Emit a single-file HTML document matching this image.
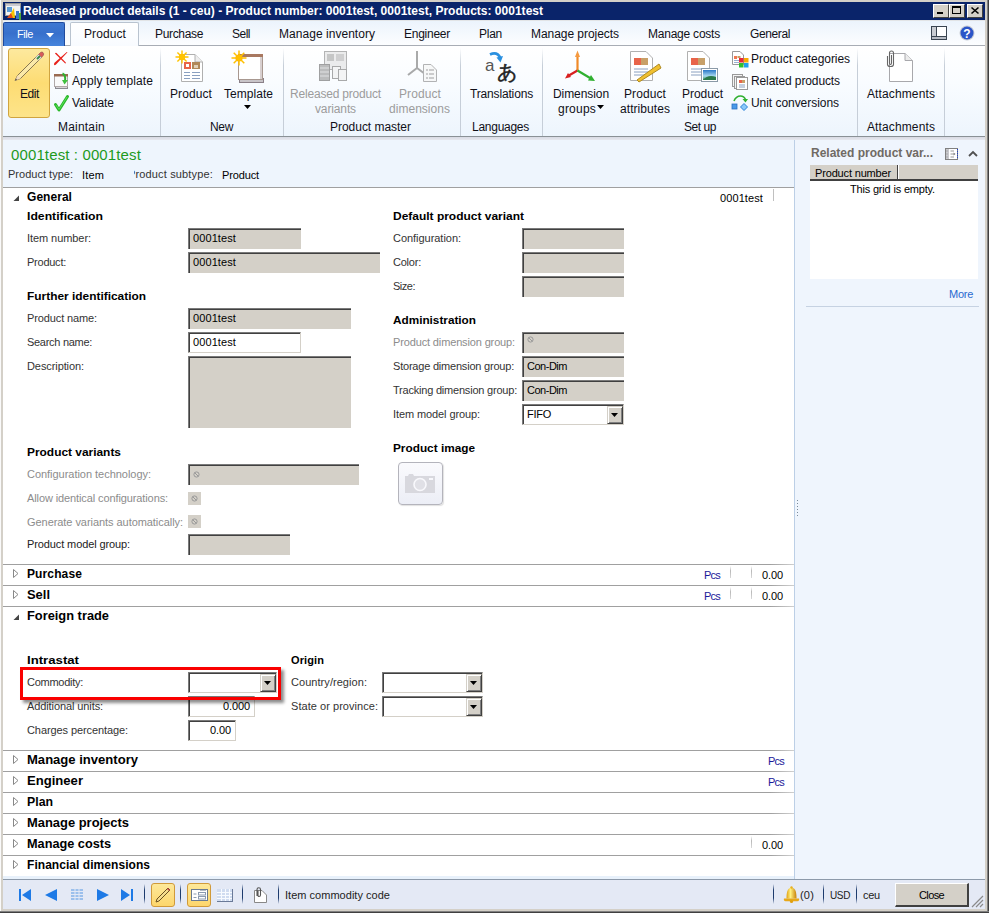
<!DOCTYPE html>
<html><head><meta charset="utf-8"><style>
html,body{margin:0;padding:0;width:989px;height:913px;overflow:hidden;position:relative;font-family:'Liberation Sans', sans-serif}
body>div,body>svg,div>div{position:absolute}
svg{position:absolute;overflow:visible}
</style></head><body>
<div style="left:0px;top:0px;width:989px;height:913px;background:#d4d0c8"></div>
<div style="left:0px;top:0px;width:1px;height:913px;background:#fafafa"></div>
<div style="left:987px;top:0px;width:1px;height:913px;background:#808080"></div>
<div style="left:988px;top:0px;width:1px;height:913px;background:#404040"></div>
<div style="left:0px;top:911px;width:989px;height:1px;background:#808080"></div>
<div style="left:0px;top:912px;width:989px;height:1px;background:#404040"></div>
<div style="left:3px;top:2px;width:982px;height:18px;background:#0a246a"></div>
<svg style="left:5px;top:3px" width="16" height="16"><rect x="0.5" y="0.5" width="15" height="12" fill="#f4f4f4" stroke="#9a9a9a"/><rect x="1" y="1" width="14" height="2" fill="#c8c8d0"/><rect x="2" y="4" width="5" height="5" fill="#5b9bd5"/><path d="M3 15 L9 5 L10 15Z" fill="#f5c400"/><path d="M2 15 L6 10 L8 15Z" fill="#e84c1c"/><rect x="11" y="8" width="3" height="8" fill="#3a78c8"/><rect x="14" y="10" width="2" height="7" fill="#4aa83a"/><rect x="15" y="5" width="1" height="4" fill="#5a9ae0"/></svg>
<div style="font-family:'Liberation Sans', sans-serif;white-space:nowrap;position:absolute;line-height:20px;font-size:12px;font-weight:bold;color:#fff;letter-spacing:0.013px;left:23px;top:1px">Released product details (1 - ceu) - Product number: 0001test, 0001test, Products: 0001test</div>
<div style="left:933px;top:4px;width:16px;height:14px;background:#d4d0c8;border-top:1px solid #fff;border-left:1px solid #fff;border-right:1px solid #404040;border-bottom:1px solid #404040;box-sizing:border-box"></div>
<div style="left:937px;top:12px;width:6px;height:2px;background:#000"></div>
<div style="left:949px;top:4px;width:16px;height:14px;background:#d4d0c8;border-top:1px solid #fff;border-left:1px solid #fff;border-right:1px solid #404040;border-bottom:1px solid #404040;box-sizing:border-box"></div>
<div style="left:952px;top:6px;width:9px;height:8px;border:1px solid #000;border-top-width:2px;box-sizing:border-box"></div>
<div style="left:967px;top:4px;width:16px;height:14px;background:#d4d0c8;border-top:1px solid #fff;border-left:1px solid #fff;border-right:1px solid #404040;border-bottom:1px solid #404040;box-sizing:border-box"></div>
<svg style="left:971px;top:7px" width="8" height="7"><path d="M0.5 0.5L7.5 6.5M7.5 0.5L0.5 6.5" stroke="#000" stroke-width="1.6"/></svg>
<div style="left:3px;top:20px;width:982px;height:26px;background:linear-gradient(#ebf3fc,#fdfeff)"></div>
<div style="left:3px;top:20px;width:982px;height:1px;background:#e2e4e6"></div>
<div style="left:3px;top:45px;width:982px;height:1px;background:#a8adb5"></div>
<div style="left:3px;top:22px;width:62px;height:24px;background:linear-gradient(#3f78d2,#3770cc 45%,#4684dc);border-radius:2px 2px 0 0;border:1px solid #1f4a9e;border-bottom:none;box-sizing:border-box"></div>
<div style="font-family:'Liberation Sans', sans-serif;white-space:nowrap;position:absolute;line-height:20px;font-size:11px;font-weight:normal;color:#fff;letter-spacing:-0.434px;left:17px;top:24px">File</div>
<svg style="left:46px;top:33px" width="8" height="5"><path d="M0 0H8L4 4.5Z" fill="#fff"/></svg>
<div style="left:70px;top:22px;width:69px;height:25px;background:linear-gradient(#ffffff,#f8fbff);border:1px solid #b9c3cf;border-bottom:none;border-radius:2px 2px 0 0;box-sizing:border-box"></div>
<div style="font-family:'Liberation Sans', sans-serif;white-space:nowrap;position:absolute;line-height:20px;font-size:12px;font-weight:normal;color:#101018;letter-spacing:0.092px;left:84px;top:24px">Product</div>
<div style="font-family:'Liberation Sans', sans-serif;white-space:nowrap;position:absolute;line-height:20px;font-size:12px;font-weight:normal;color:#101018;letter-spacing:-0.338px;left:155px;top:24px">Purchase</div>
<div style="font-family:'Liberation Sans', sans-serif;white-space:nowrap;position:absolute;line-height:20px;font-size:12px;font-weight:normal;color:#101018;letter-spacing:-0.504px;left:232px;top:24px">Sell</div>
<div style="font-family:'Liberation Sans', sans-serif;white-space:nowrap;position:absolute;line-height:20px;font-size:12px;font-weight:normal;color:#101018;letter-spacing:0.038px;left:279px;top:24px">Manage inventory</div>
<div style="font-family:'Liberation Sans', sans-serif;white-space:nowrap;position:absolute;line-height:20px;font-size:12px;font-weight:normal;color:#101018;letter-spacing:-0.256px;left:404px;top:24px">Engineer</div>
<div style="font-family:'Liberation Sans', sans-serif;white-space:nowrap;position:absolute;line-height:20px;font-size:12px;font-weight:normal;color:#101018;letter-spacing:-0.258px;left:479px;top:24px">Plan</div>
<div style="font-family:'Liberation Sans', sans-serif;white-space:nowrap;position:absolute;line-height:20px;font-size:12px;font-weight:normal;color:#101018;letter-spacing:-0.048px;left:531px;top:24px">Manage projects</div>
<div style="font-family:'Liberation Sans', sans-serif;white-space:nowrap;position:absolute;line-height:20px;font-size:12px;font-weight:normal;color:#101018;letter-spacing:-0.227px;left:648px;top:24px">Manage costs</div>
<div style="font-family:'Liberation Sans', sans-serif;white-space:nowrap;position:absolute;line-height:20px;font-size:12px;font-weight:normal;color:#101018;letter-spacing:-0.386px;left:750px;top:24px">General</div>
<svg style="left:931px;top:26px" width="16" height="14"><rect x="0.5" y="0.5" width="15" height="13" fill="#fff" stroke="#3a4450"/><rect x="1" y="1" width="4" height="10" fill="#c9ccd2"/><rect x="1" y="11" width="14" height="2" fill="#b8bcc4"/><line x1="5.5" y1="1" x2="5.5" y2="11" stroke="#3a4450"/><line x1="1" y1="10.5" x2="15" y2="10.5" stroke="#3a4450"/></svg>
<svg style="left:959px;top:25px" width="16" height="16"><circle cx="8" cy="8" r="7.5" fill="#c8ccd4"/><circle cx="8" cy="8" r="6.5" fill="#2a55c8"/><text x="8" y="12.5" font-family="Liberation Sans" font-weight="bold" font-size="12" fill="#fff" text-anchor="middle">?</text></svg>
<div style="left:3px;top:46px;width:982px;height:90px;background:linear-gradient(#ffffff 0%,#f9fcff 40%,#edf5fd 100%)"></div>
<div style="left:3px;top:136px;width:982px;height:1px;background:#8a9196"></div>
<div style="left:3px;top:137px;width:982px;height:3px;background:linear-gradient(#d8dae3,#e6e8ef)"></div>
<div style="left:160px;top:48px;width:1px;height:88px;background:linear-gradient(rgba(200,208,218,0),#c6ced8 20%,#c6ced8)"></div>
<div style="left:283px;top:48px;width:1px;height:88px;background:linear-gradient(rgba(200,208,218,0),#c6ced8 20%,#c6ced8)"></div>
<div style="left:460px;top:48px;width:1px;height:88px;background:linear-gradient(rgba(200,208,218,0),#c6ced8 20%,#c6ced8)"></div>
<div style="left:542px;top:48px;width:1px;height:88px;background:linear-gradient(rgba(200,208,218,0),#c6ced8 20%,#c6ced8)"></div>
<div style="left:857px;top:48px;width:1px;height:88px;background:linear-gradient(rgba(200,208,218,0),#c6ced8 20%,#c6ced8)"></div>
<div style="left:944px;top:48px;width:1px;height:88px;background:linear-gradient(rgba(200,208,218,0),#c6ced8 20%,#c6ced8)"></div>
<div style="left:8px;top:48px;width:42px;height:70px;background:linear-gradient(#fde99e,#fddc73 50%,#fde48a);border:1px solid #d0a440;border-radius:3px;box-sizing:border-box"></div>
<svg style="left:13px;top:50px" width="32" height="32"><path d="M2 30.5 L4.5 25.5 L25.5 4.5 L28.5 7.5 L7.5 28.5 Z" fill="#fbe9a8" stroke="#7a6a4a" stroke-width="0.9"/><path d="M25.5 4.5 L27.5 2.5 Q29 1.5 30 2.5 Q31 3.5 30.5 5 L28.5 7.5Z" fill="#d85a5a" stroke="#8a4a4a" stroke-width="0.6"/><path d="M22.5 7.5 L25.5 4.5 L28.5 7.5 L25.5 10.5Z" fill="#e8e8e8"/><path d="M23.3 8.3 L26.3 5.3 L27.7 6.7 L24.7 9.7Z" fill="#3a8a4a"/><path d="M2 30.5 L4.5 25.5 L7.5 28.5Z" fill="#f4dcb8"/><path d="M2 30.5 L3 28.5 L4 29.5Z" fill="#333"/></svg>
<div style="font-family:'Liberation Sans', sans-serif;white-space:nowrap;position:absolute;line-height:20px;font-size:12px;font-weight:normal;color:#101018;letter-spacing:-0.422px;left:20px;top:84px">Edit</div>
<svg style="left:53px;top:51px" width="16" height="16"><path d="M1 13.5 Q1.5 15 3 13.5 L14.5 1.2 L13.8 1 L1.8 11.5 Q0.8 12.5 1 13.5Z" fill="#e8201a"/><path d="M2 2.5 Q2.5 1.5 3.5 2 L12.8 11.5 Q13 12.5 12.2 12.5 Z" fill="#e8201a"/></svg>
<svg style="left:54px;top:73px" width="16" height="17"><rect x="1.5" y="12.5" width="12" height="3" fill="#d8d4d8" stroke="#8a8a90"/><rect x="0.5" y="1.5" width="13" height="12" fill="#fafafa" stroke="#b0a8a8"/><rect x="0" y="1" width="14" height="2.5" fill="#9a6a50"/><path d="M8.5 0.5 Q12 2 11 8" stroke="#30b030" stroke-width="2" fill="none"/><path d="M8 7 L14 7 L10.5 11.5Z" fill="#40c040"/></svg>
<svg style="left:54px;top:95px" width="16" height="17"><path d="M1.5 9.5 L5 15 L13.5 1.5" stroke="#2ab82a" stroke-width="3" fill="none" stroke-linejoin="round" stroke-linecap="round"/><path d="M1.8 9.8 L5 14.5 L13.2 1.8" stroke="#5ae05a" stroke-width="1" fill="none"/></svg>
<div style="font-family:'Liberation Sans', sans-serif;white-space:nowrap;position:absolute;line-height:20px;font-size:12px;font-weight:normal;color:#101018;letter-spacing:-0.281px;left:72px;top:49px">Delete</div>
<div style="font-family:'Liberation Sans', sans-serif;white-space:nowrap;position:absolute;line-height:20px;font-size:12px;font-weight:normal;color:#101018;letter-spacing:0.115px;left:72px;top:71px">Apply template</div>
<div style="font-family:'Liberation Sans', sans-serif;white-space:nowrap;position:absolute;line-height:20px;font-size:12px;font-weight:normal;color:#101018;letter-spacing:-0.061px;left:72px;top:93px">Validate</div>
<div style="font-family:'Liberation Sans', sans-serif;white-space:nowrap;position:absolute;line-height:20px;font-size:12px;font-weight:normal;color:#101018;letter-spacing:0.205px;left:58px;top:117px">Maintain</div>
<svg style="left:174px;top:50px" width="32" height="34"><path d="M7.5 4.5 H21 L28.5 12 V31.5 H7.5Z" fill="#fff" stroke="#b0b0b0"/><path d="M21 4.5 V12 H28.5" fill="#eee" stroke="#b0b0b0"/><rect x="10" y="12" width="7" height="7" fill="#e8644a"/><rect x="12" y="14" width="3" height="3" fill="#fff"/><rect x="18" y="12" width="8" height="7" fill="#b08858"/><rect x="20" y="15" width="4" height="3" fill="#e0d0b8"/><path d="M10 22.5H16M18 22.5H26M10 25.5H16M18 25.5H26M10 28.5H16M18 28.5H26" stroke="#8aa0c0"/><circle cx="8" cy="7" r="3.2" fill="#ffb800"/><path d="M8 0.5V13.5M1.5 7H14.5M3.4 2.4L12.6 11.6M12.6 2.4L3.4 11.6" stroke="#ffc400" stroke-width="1.4"/></svg>
<svg style="left:229px;top:50px" width="36" height="34"><rect x="10.5" y="28.5" width="24" height="4" fill="#c8c4c8" stroke="#8a8088"/><rect x="9.5" y="4.5" width="24" height="25" fill="#fff" stroke="#a89890"/><rect x="9" y="4" width="25" height="3" fill="#a87860"/><rect x="31" y="7" width="2" height="22" fill="#d8d0d0"/><circle cx="10" cy="8" r="3.6" fill="#ffb000"/><path d="M10 0.5V15.5M2.5 8H17.5M4.7 2.7L15.3 13.3M15.3 2.7L4.7 13.3" stroke="#ffc000" stroke-width="1.5"/></svg>
<div style="font-family:'Liberation Sans', sans-serif;white-space:nowrap;position:absolute;line-height:20px;font-size:12px;font-weight:normal;color:#101018;letter-spacing:0.092px;left:170px;top:84px">Product</div>
<div style="font-family:'Liberation Sans', sans-serif;white-space:nowrap;position:absolute;line-height:20px;font-size:12px;font-weight:normal;color:#101018;letter-spacing:0.037px;left:224px;top:84px">Template</div>
<svg style="left:244px;top:105px" width="7" height="5"><path d="M0 0H7L3.5 4Z" fill="#000"/></svg>
<div style="font-family:'Liberation Sans', sans-serif;white-space:nowrap;position:absolute;line-height:20px;font-size:12px;font-weight:normal;color:#101018;letter-spacing:-0.339px;left:210px;top:117px">New</div>
<svg style="left:318px;top:50px" width="32" height="32" opacity="0.55"><rect x="6.5" y="1.5" width="22" height="18" fill="#ddd" stroke="#777"/><rect x="9" y="4" width="7" height="7" fill="#999"/><rect x="18" y="4" width="8" height="7" fill="#aaa"/><rect x="1.5" y="14.5" width="10" height="16" fill="#888" stroke="#555"/><path d="M2 18H11M2 22H11M2 26H11" stroke="#ccc"/><rect x="14.5" y="16.5" width="8" height="12" fill="#eee" stroke="#666"/><rect x="20.5" y="19.5" width="8" height="11" fill="#eee" stroke="#666"/></svg>
<svg style="left:406px;top:50px" width="32" height="32" opacity="0.55"><path d="M11 1 V18 M11 18 L2 25 M11 18 L19 24" stroke="#666" stroke-width="2"/><path d="M17.5 14.5 H25 L30.5 20 V31.5 H17.5Z" fill="#f4f4f4" stroke="#777"/><path d="M20 20h2M20 24h2M20 28h2M23 20h5M23 24h5M23 28h5" stroke="#555"/></svg>
<div style="font-family:'Liberation Sans', sans-serif;white-space:nowrap;position:absolute;line-height:20px;font-size:12px;font-weight:normal;color:#9c9c9c;letter-spacing:-0.191px;left:290px;top:84px">Released product</div>
<div style="font-family:'Liberation Sans', sans-serif;white-space:nowrap;position:absolute;line-height:20px;font-size:12px;font-weight:normal;color:#9c9c9c;letter-spacing:-0.129px;left:315px;top:99px">variants</div>
<div style="font-family:'Liberation Sans', sans-serif;white-space:nowrap;position:absolute;line-height:20px;font-size:12px;font-weight:normal;color:#9c9c9c;letter-spacing:0.092px;left:399px;top:84px">Product</div>
<div style="font-family:'Liberation Sans', sans-serif;white-space:nowrap;position:absolute;line-height:20px;font-size:12px;font-weight:normal;color:#9c9c9c;letter-spacing:0.030px;left:389px;top:99px">dimensions</div>
<div style="font-family:'Liberation Sans', sans-serif;white-space:nowrap;position:absolute;line-height:20px;font-size:12px;font-weight:normal;color:#101018;letter-spacing:-0.027px;left:330px;top:117px">Product master</div>
<svg style="left:484px;top:50px" width="34" height="34"><path d="M6 4.5 Q13 1 16.5 8" stroke="#2a90e0" stroke-width="2.6" fill="none"/><path d="M12.5 7.5 L19 6 L16.5 12.5Z" fill="#2a90e0"/><text x="1" y="21" font-family="Liberation Sans" font-size="17" fill="#555">a</text><text x="13" y="29" font-family="Liberation Sans, sans-serif" font-size="20" fill="#222" stroke="#222" stroke-width="0.5">あ</text></svg>
<div style="font-family:'Liberation Sans', sans-serif;white-space:nowrap;position:absolute;line-height:20px;font-size:12px;font-weight:normal;color:#101018;letter-spacing:-0.160px;left:470px;top:84px">Translations</div>
<div style="font-family:'Liberation Sans', sans-serif;white-space:nowrap;position:absolute;line-height:20px;font-size:12px;font-weight:normal;color:#101018;letter-spacing:-0.266px;left:472px;top:117px">Languages</div>
<svg style="left:562px;top:49px" width="36" height="34"><path d="M15.5 5 L15.5 21.5" stroke="#f08a28" stroke-width="2.2"/><path d="M13 8 L15.5 1.5 L18 8Z" fill="#f59a40"/><path d="M15.5 21.5 L6 27" stroke="#d82020" stroke-width="2.2"/><path d="M3 29.5 L6 24 L9 28Z" fill="#d82020"/><path d="M15.5 21.5 L28 29" stroke="#30b030" stroke-width="2.2"/><path d="M33 32 L26 31.5 L29 26Z" fill="#30b030"/></svg>
<div style="font-family:'Liberation Sans', sans-serif;white-space:nowrap;position:absolute;line-height:20px;font-size:12px;font-weight:normal;color:#101018;letter-spacing:-0.078px;left:553px;top:84px">Dimension</div>
<div style="font-family:'Liberation Sans', sans-serif;white-space:nowrap;position:absolute;line-height:20px;font-size:12px;font-weight:normal;color:#101018;letter-spacing:0.216px;left:558px;top:99px">groups</div>
<svg style="left:597px;top:105px" width="7" height="5"><path d="M0 0H7L3.5 4Z" fill="#000"/></svg>
<svg style="left:629px;top:50px" width="32" height="32"><path d="M1.5 1.5 H17 L23.5 8 V30.5 H1.5Z" fill="#fff" stroke="#b0b0b0"/><rect x="5" y="8" width="7" height="7" fill="#e8644a"/><rect x="12" y="8" width="7" height="7" fill="#c8a068"/><path d="M5 19H19M5 22H19M5 25H19" stroke="#8aa0c0"/><path d="M8 30 L30 14 L32 18 L10 32Z" fill="#f0c030" stroke="#b08a20"/></svg>
<div style="font-family:'Liberation Sans', sans-serif;white-space:nowrap;position:absolute;line-height:20px;font-size:12px;font-weight:normal;color:#101018;letter-spacing:0.092px;left:624px;top:84px">Product</div>
<div style="font-family:'Liberation Sans', sans-serif;white-space:nowrap;position:absolute;line-height:20px;font-size:12px;font-weight:normal;color:#101018;letter-spacing:0.064px;left:620px;top:99px">attributes</div>
<svg style="left:686px;top:50px" width="32" height="32"><path d="M1.5 1.5 H17 L23.5 8 V30.5 H1.5Z" fill="#fff" stroke="#b0b0b0"/><rect x="5" y="8" width="7" height="7" fill="#e8644a"/><rect x="12" y="8" width="7" height="7" fill="#c8a068"/><path d="M5 19H15M5 22H15M5 25H15" stroke="#8aa0c0"/><defs><linearGradient id="sky" x1="0" y1="0" x2="0" y2="1"><stop offset="0" stop-color="#2a78c8"/><stop offset="0.6" stop-color="#a8d8f0"/><stop offset="1" stop-color="#3a8a5a"/></linearGradient></defs><rect x="15.5" y="18.5" width="16" height="13" fill="#fff" stroke="#8a9aa8"/><rect x="17" y="20" width="13" height="10" fill="url(#sky)"/><path d="M17 30 Q22 24 30 27 V30Z" fill="#2a7a4a"/></svg>
<div style="font-family:'Liberation Sans', sans-serif;white-space:nowrap;position:absolute;line-height:20px;font-size:12px;font-weight:normal;color:#101018;letter-spacing:-0.051px;left:682px;top:84px">Product</div>
<div style="font-family:'Liberation Sans', sans-serif;white-space:nowrap;position:absolute;line-height:20px;font-size:12px;font-weight:normal;color:#101018;letter-spacing:-0.138px;left:687px;top:99px">image</div>
<div style="font-family:'Liberation Sans', sans-serif;white-space:nowrap;position:absolute;line-height:20px;font-size:12px;font-weight:normal;color:#101018;letter-spacing:-0.451px;left:684px;top:117px">Set up</div>
<svg style="left:732px;top:51px" width="17" height="17"><path d="M0.5 0.5H8L11.5 4V13.5H0.5Z" fill="#fff" stroke="#999"/><rect x="2" y="5" width="3" height="3" fill="#f07850"/><rect x="5.5" y="5" width="3" height="2" fill="#c8a068"/><path d="M2 9.5H7M2 11.5H7" stroke="#9ab0d0"/><rect x="7" y="7" width="4.5" height="4.5" fill="#e82838"/><rect x="12" y="7" width="4.5" height="4.5" fill="#f8a800"/><rect x="7" y="12" width="4.5" height="4.5" fill="#30c030"/><rect x="12" y="12" width="4.5" height="4.5" fill="#20a0e8"/></svg>
<svg style="left:732px;top:74px" width="17" height="16"><rect x="0.5" y="0.5" width="10" height="12" fill="#f4f4f4" stroke="#999"/><rect x="2.5" y="2.5" width="10" height="12" fill="#f4f4f4" stroke="#999"/><rect x="4.5" y="3.5" width="11" height="12" fill="#fff" stroke="#999"/><rect x="7" y="6" width="3" height="3" fill="#e8644a"/><rect x="10" y="6" width="3" height="3" fill="#c8a068"/><path d="M7 11H13M7 13H13" stroke="#8aa0c0"/></svg>
<svg style="left:731px;top:95px" width="18" height="16"><path d="M3 6 Q5 1 9.5 1 Q13 1 14.5 4.5" stroke="#30b030" stroke-width="1.6" fill="none"/><path d="M11.5 4 L17 4 L14.5 7.5Z" fill="#30b030"/><rect x="1" y="9" width="5" height="5" fill="#4a9ae8" stroke="#2a70c0" stroke-width="0.8"/><path d="M13 8.5 L16.5 12 L13 15.5 L9.5 12Z" fill="#8ac8f8" stroke="#2a80d8"/></svg>
<div style="font-family:'Liberation Sans', sans-serif;white-space:nowrap;position:absolute;line-height:20px;font-size:12px;font-weight:normal;color:#101018;letter-spacing:-0.059px;left:751px;top:49px">Product categories</div>
<div style="font-family:'Liberation Sans', sans-serif;white-space:nowrap;position:absolute;line-height:20px;font-size:12px;font-weight:normal;color:#101018;letter-spacing:-0.108px;left:751px;top:71px">Related products</div>
<div style="font-family:'Liberation Sans', sans-serif;white-space:nowrap;position:absolute;line-height:20px;font-size:12px;font-weight:normal;color:#101018;letter-spacing:-0.045px;left:751px;top:93px">Unit conversions</div>
<svg style="left:884px;top:50px" width="32" height="33"><path d="M5.5 3.5 H21 L28.5 10.5 V31.5 H5.5Z" fill="#fff" stroke="#a8a8ac"/><path d="M21 3.5 V10.5 H28.5" fill="#ececec" stroke="#a8a8ac"/><path d="M3.5 6 V14.5 Q3.5 16.5 6.5 16.5 Q9.5 16.5 9.5 14.5 V3 Q9.5 1 7.5 1 Q5.5 1 5.5 3 V13 Q5.5 14.5 6.5 14.5 Q7.5 14.5 7.5 13 V5" stroke="#666" stroke-width="1.1" fill="none"/></svg>
<div style="font-family:'Liberation Sans', sans-serif;white-space:nowrap;position:absolute;line-height:20px;font-size:12px;font-weight:normal;color:#101018;letter-spacing:0.118px;left:867px;top:84px">Attachments</div>
<div style="font-family:'Liberation Sans', sans-serif;white-space:nowrap;position:absolute;line-height:20px;font-size:12px;font-weight:normal;color:#101018;letter-spacing:0.118px;left:867px;top:117px">Attachments</div>
<div style="left:3px;top:140px;width:792px;height:47px;background:#eef5fd"></div>
<div style="font-family:'Liberation Sans', sans-serif;white-space:nowrap;position:absolute;line-height:20px;font-size:15px;font-weight:normal;color:#1e9a1e;letter-spacing:0.126px;left:11px;top:145px">0001test : 0001test</div>
<div style="font-family:'Liberation Sans', sans-serif;white-space:nowrap;position:absolute;line-height:20px;font-size:11px;font-weight:normal;color:#333;letter-spacing:0.013px;left:8px;top:164px">Product type:</div>
<div style="font-family:'Liberation Sans', sans-serif;white-space:nowrap;position:absolute;line-height:20px;font-size:11px;font-weight:normal;color:#000;letter-spacing:0.148px;left:82px;top:165px">Item</div>
<div style="left:134px;top:160px;width:90px;height:25px;overflow:hidden"><div style="font-family:'Liberation Sans', sans-serif;white-space:nowrap;position:absolute;line-height:20px;font-size:11px;font-weight:normal;color:#333;letter-spacing:0.152px;left:-6px;top:4px">Product subtype:</div></div>
<div style="font-family:'Liberation Sans', sans-serif;white-space:nowrap;position:absolute;line-height:20px;font-size:11px;font-weight:normal;color:#000;letter-spacing:-0.132px;left:222px;top:165px">Product</div>
<div style="left:3px;top:187px;width:791px;height:692px;background:#fff"></div>
<div style="left:3px;top:187px;width:791px;height:1px;background:#a0a0a0"></div>
<div style="left:794px;top:140px;width:1px;height:739px;background:#bccfe6"></div>
<div style="left:795px;top:140px;width:190px;height:739px;background:#eff5fd"></div>
<div style="left:797px;top:500px;width:1px;height:1px;background:#7a8a9a"></div>
<div style="left:797px;top:503px;width:1px;height:1px;background:#7a8a9a"></div>
<div style="left:797px;top:506px;width:1px;height:1px;background:#7a8a9a"></div>
<div style="left:797px;top:509px;width:1px;height:1px;background:#7a8a9a"></div>
<div style="left:797px;top:512px;width:1px;height:1px;background:#7a8a9a"></div>
<div style="left:797px;top:515px;width:1px;height:1px;background:#7a8a9a"></div>
<svg style="left:13px;top:195px" width="7" height="7"><path d="M6 0.5 V6 H0.5Z" fill="#444"/></svg>
<div style="font-family:'Liberation Sans', sans-serif;white-space:nowrap;position:absolute;line-height:20px;font-size:12px;font-weight:bold;color:#000;letter-spacing:0.042px;left:27px;top:187px">General</div>
<div style="font-family:'Liberation Sans', sans-serif;white-space:nowrap;position:absolute;line-height:20px;font-size:11px;font-weight:normal;color:#000;letter-spacing:0.100px;left:720px;top:188px">0001test</div>
<div style="left:773px;top:189px;width:1px;height:12px;background:#c0c0c0"></div>
<div style="font-family:'Liberation Sans', sans-serif;white-space:nowrap;position:absolute;line-height:20px;font-size:11px;font-weight:bold;color:#000;transform:scaleX(1.1102);transform-origin:0 0;left:27px;top:206px">Identification</div>
<div style="font-family:'Liberation Sans', sans-serif;white-space:nowrap;position:absolute;line-height:20px;font-size:11px;font-weight:normal;color:#333;letter-spacing:-0.068px;left:27px;top:228px">Item number:</div>
<div style="left:188px;top:228px;width:113px;height:21px;background:#d4d0c8;border-top:1px solid #7a7a7a;border-left:1px solid #7a7a7a;box-sizing:border-box;box-shadow:inset 1px 1px 0 #404040"></div>
<div style="font-family:'Liberation Sans', sans-serif;white-space:nowrap;position:absolute;line-height:20px;font-size:11px;font-weight:normal;color:#000;letter-spacing:0.100px;left:193px;top:228px">0001test</div>
<div style="font-family:'Liberation Sans', sans-serif;white-space:nowrap;position:absolute;line-height:20px;font-size:11px;font-weight:normal;color:#333;letter-spacing:-0.246px;left:27px;top:252px">Product:</div>
<div style="left:188px;top:252px;width:192px;height:21px;background:#d4d0c8;border-top:1px solid #7a7a7a;border-left:1px solid #7a7a7a;box-sizing:border-box;box-shadow:inset 1px 1px 0 #404040"></div>
<div style="font-family:'Liberation Sans', sans-serif;white-space:nowrap;position:absolute;line-height:20px;font-size:11px;font-weight:normal;color:#000;letter-spacing:0.100px;left:193px;top:252px">0001test</div>
<div style="font-family:'Liberation Sans', sans-serif;white-space:nowrap;position:absolute;line-height:20px;font-size:11px;font-weight:bold;color:#000;transform:scaleX(1.0818);transform-origin:0 0;left:27px;top:286px">Further identification</div>
<div style="font-family:'Liberation Sans', sans-serif;white-space:nowrap;position:absolute;line-height:20px;font-size:11px;font-weight:normal;color:#333;letter-spacing:-0.119px;left:27px;top:308px">Product name:</div>
<div style="left:188px;top:308px;width:163px;height:21px;background:#d4d0c8;border-top:1px solid #7a7a7a;border-left:1px solid #7a7a7a;box-sizing:border-box;box-shadow:inset 1px 1px 0 #404040"></div>
<div style="font-family:'Liberation Sans', sans-serif;white-space:nowrap;position:absolute;line-height:20px;font-size:11px;font-weight:normal;color:#000;letter-spacing:0.100px;left:193px;top:308px">0001test</div>
<div style="font-family:'Liberation Sans', sans-serif;white-space:nowrap;position:absolute;line-height:20px;font-size:11px;font-weight:normal;color:#333;letter-spacing:-0.290px;left:27px;top:332px">Search name:</div>
<div style="left:188px;top:332px;width:113px;height:21px;background:#fff;border-top:1px solid #7a7a7a;border-left:1px solid #7a7a7a;border-right:1px solid #d4d0c8;border-bottom:1px solid #d4d0c8;box-sizing:border-box;box-shadow:inset 1px 1px 0 #404040"></div>
<div style="font-family:'Liberation Sans', sans-serif;white-space:nowrap;position:absolute;line-height:20px;font-size:11px;font-weight:normal;color:#000;letter-spacing:0.100px;left:193px;top:332px">0001test</div>
<div style="font-family:'Liberation Sans', sans-serif;white-space:nowrap;position:absolute;line-height:20px;font-size:11px;font-weight:normal;color:#333;letter-spacing:-0.090px;left:27px;top:356px">Description:</div>
<div style="left:188px;top:356px;width:163px;height:72px;background:#d4d0c8;border-top:1px solid #7a7a7a;border-left:1px solid #7a7a7a;box-sizing:border-box;box-shadow:inset 1px 1px 0 #404040"></div>
<div style="font-family:'Liberation Sans', sans-serif;white-space:nowrap;position:absolute;line-height:20px;font-size:11px;font-weight:bold;color:#000;transform:scaleX(1.0880);transform-origin:0 0;left:393px;top:206px">Default product variant</div>
<div style="font-family:'Liberation Sans', sans-serif;white-space:nowrap;position:absolute;line-height:20px;font-size:11px;font-weight:normal;color:#333;letter-spacing:-0.036px;left:393px;top:228px">Configuration:</div>
<div style="left:522px;top:228px;width:102px;height:21px;background:#d4d0c8;border-top:1px solid #7a7a7a;border-left:1px solid #7a7a7a;box-sizing:border-box;box-shadow:inset 1px 1px 0 #404040"></div>
<div style="font-family:'Liberation Sans', sans-serif;white-space:nowrap;position:absolute;line-height:20px;font-size:11px;font-weight:normal;color:#333;letter-spacing:-0.224px;left:393px;top:252px">Color:</div>
<div style="left:522px;top:252px;width:102px;height:21px;background:#d4d0c8;border-top:1px solid #7a7a7a;border-left:1px solid #7a7a7a;box-sizing:border-box;box-shadow:inset 1px 1px 0 #404040"></div>
<div style="font-family:'Liberation Sans', sans-serif;white-space:nowrap;position:absolute;line-height:20px;font-size:11px;font-weight:normal;color:#333;letter-spacing:-0.494px;left:393px;top:276px">Size:</div>
<div style="left:522px;top:276px;width:102px;height:21px;background:#d4d0c8;border-top:1px solid #7a7a7a;border-left:1px solid #7a7a7a;box-sizing:border-box;box-shadow:inset 1px 1px 0 #404040"></div>
<div style="font-family:'Liberation Sans', sans-serif;white-space:nowrap;position:absolute;line-height:20px;font-size:11px;font-weight:bold;color:#000;transform:scaleX(1.0692);transform-origin:0 0;left:393px;top:310px">Administration</div>
<div style="font-family:'Liberation Sans', sans-serif;white-space:nowrap;position:absolute;line-height:20px;font-size:11px;font-weight:normal;color:#8c8c8c;letter-spacing:-0.140px;left:393px;top:332px">Product dimension group:</div>
<div style="left:522px;top:332px;width:102px;height:21px;background:#d4d0c8;border-top:1px solid #7a7a7a;border-left:1px solid #7a7a7a;box-sizing:border-box;box-shadow:inset 1px 1px 0 #404040"></div>
<svg style="left:527px;top:336px" width="7" height="7"><circle cx="3.5" cy="3.5" r="2.6" fill="none" stroke="#999"/><path d="M1.7 1.7L5.3 5.3" stroke="#999"/></svg>
<div style="font-family:'Liberation Sans', sans-serif;white-space:nowrap;position:absolute;line-height:20px;font-size:11px;font-weight:normal;color:#333;letter-spacing:-0.207px;left:393px;top:356px">Storage dimension group:</div>
<div style="left:522px;top:356px;width:102px;height:21px;background:#d4d0c8;border-top:1px solid #7a7a7a;border-left:1px solid #7a7a7a;box-sizing:border-box;box-shadow:inset 1px 1px 0 #404040"></div>
<div style="font-family:'Liberation Sans', sans-serif;white-space:nowrap;position:absolute;line-height:20px;font-size:11px;font-weight:normal;color:#000;letter-spacing:-0.487px;left:527px;top:356px">Con-Dim</div>
<div style="font-family:'Liberation Sans', sans-serif;white-space:nowrap;position:absolute;line-height:20px;font-size:11px;font-weight:normal;color:#333;letter-spacing:-0.209px;left:393px;top:380px">Tracking dimension group:</div>
<div style="left:522px;top:380px;width:102px;height:21px;background:#d4d0c8;border-top:1px solid #7a7a7a;border-left:1px solid #7a7a7a;box-sizing:border-box;box-shadow:inset 1px 1px 0 #404040"></div>
<div style="font-family:'Liberation Sans', sans-serif;white-space:nowrap;position:absolute;line-height:20px;font-size:11px;font-weight:normal;color:#000;letter-spacing:-0.487px;left:527px;top:380px">Con-Dim</div>
<div style="font-family:'Liberation Sans', sans-serif;white-space:nowrap;position:absolute;line-height:20px;font-size:11px;font-weight:normal;color:#333;letter-spacing:-0.097px;left:393px;top:404px">Item model group:</div>
<div style="left:522px;top:404px;width:102px;height:21px;background:#fff;border-top:1px solid #7a7a7a;border-left:1px solid #7a7a7a;border-right:1px solid #d4d0c8;border-bottom:1px solid #d4d0c8;box-sizing:border-box;box-shadow:inset 1px 1px 0 #404040"></div>
<div style="left:607px;top:406px;width:16px;height:18px;background:#d4d0c8;border-top:1px solid #d4d0c8;border-left:1px solid #d4d0c8;border-right:1px solid #404040;border-bottom:1px solid #404040;box-sizing:border-box;box-shadow:inset 1px 1px 0 #fff,inset -1px -1px 0 #808080"></div>
<svg style="left:611px;top:413px" width="7" height="5"><path d="M0 0H7L3.5 4Z" fill="#000"/></svg>
<div style="font-family:'Liberation Sans', sans-serif;white-space:nowrap;position:absolute;line-height:20px;font-size:11px;font-weight:normal;color:#000;letter-spacing:-0.266px;left:527px;top:404px">FIFO</div>
<div style="font-family:'Liberation Sans', sans-serif;white-space:nowrap;position:absolute;line-height:20px;font-size:11px;font-weight:bold;color:#000;transform:scaleX(1.0828);transform-origin:0 0;left:27px;top:442px">Product variants</div>
<div style="font-family:'Liberation Sans', sans-serif;white-space:nowrap;position:absolute;line-height:20px;font-size:11px;font-weight:normal;color:#8c8c8c;letter-spacing:-0.030px;left:27px;top:464px">Configuration technology:</div>
<div style="left:188px;top:464px;width:171px;height:21px;background:#d4d0c8;border-top:1px solid #7a7a7a;border-left:1px solid #7a7a7a;box-sizing:border-box;box-shadow:inset 1px 1px 0 #404040"></div>
<svg style="left:193px;top:471px" width="7" height="7"><circle cx="3.5" cy="3.5" r="2.6" fill="none" stroke="#999"/><path d="M1.7 1.7L5.3 5.3" stroke="#999"/></svg>
<div style="font-family:'Liberation Sans', sans-serif;white-space:nowrap;position:absolute;line-height:20px;font-size:11px;font-weight:normal;color:#8c8c8c;letter-spacing:-0.107px;left:27px;top:488px">Allow identical configurations:</div>
<div style="left:188px;top:492px;width:13px;height:13px;background:#d4d0c8"></div>
<svg style="left:191px;top:495px" width="7" height="7"><circle cx="3.5" cy="3.5" r="2.6" fill="none" stroke="#999"/><path d="M1.7 1.7L5.3 5.3" stroke="#999"/></svg>
<div style="font-family:'Liberation Sans', sans-serif;white-space:nowrap;position:absolute;line-height:20px;font-size:11px;font-weight:normal;color:#8c8c8c;letter-spacing:-0.055px;left:27px;top:512px">Generate variants automatically:</div>
<div style="left:188px;top:515px;width:13px;height:13px;background:#d4d0c8"></div>
<svg style="left:191px;top:518px" width="7" height="7"><circle cx="3.5" cy="3.5" r="2.6" fill="none" stroke="#999"/><path d="M1.7 1.7L5.3 5.3" stroke="#999"/></svg>
<div style="font-family:'Liberation Sans', sans-serif;white-space:nowrap;position:absolute;line-height:20px;font-size:11px;font-weight:normal;color:#222;letter-spacing:-0.109px;left:27px;top:534px">Product model group:</div>
<div style="left:188px;top:534px;width:102px;height:21px;background:#d4d0c8;border-top:1px solid #7a7a7a;border-left:1px solid #7a7a7a;box-sizing:border-box;box-shadow:inset 1px 1px 0 #404040"></div>
<div style="font-family:'Liberation Sans', sans-serif;white-space:nowrap;position:absolute;line-height:20px;font-size:11px;font-weight:bold;color:#000;transform:scaleX(1.0732);transform-origin:0 0;left:393px;top:438px">Product image</div>
<div style="left:398px;top:462px;width:45px;height:43px;background:linear-gradient(#fafafd,#eceef6);border:1px solid #b4b4bc;border-radius:4px;box-sizing:border-box;box-shadow:1px 1px 1px rgba(0,0,0,.12)"></div>
<svg style="left:404px;top:473px" width="32" height="21"><path d="M1 3 H4 L5 1 H9 L10 3 H31 V20 H1Z" fill="#d8d8de"/><circle cx="16" cy="11.5" r="6" fill="#e0e0e6" stroke="#f8f8fc" stroke-width="1.6"/><rect x="25" y="5" width="4" height="2" fill="#f8f8fc"/></svg>
<div style="left:3px;top:564px;width:791px;height:1px;background:linear-gradient(90deg,#a0a0a0 0%,#a0a0a0 97%,#d0d0d0 100%)"></div>
<svg style="left:13px;top:569px" width="7" height="10"><path d="M0.5 0.5 L5 4.5 L0.5 8.5Z" fill="#fff" stroke="#888"/></svg>
<div style="font-family:'Liberation Sans', sans-serif;white-space:nowrap;position:absolute;line-height:20px;font-size:12px;font-weight:bold;color:#000;letter-spacing:0.121px;left:27px;top:564px">Purchase</div>
<div style="font-family:'Liberation Sans', sans-serif;white-space:nowrap;position:absolute;line-height:20px;font-size:11px;font-weight:normal;color:#1a1a9a;letter-spacing:-0.781px;left:704px;top:565px">Pcs</div>
<div style="left:730px;top:566px;width:1px;height:12px;background:linear-gradient(#fff,#b8b8b8 40%,#d8d8d8)"></div>
<div style="left:751px;top:566px;width:1px;height:12px;background:linear-gradient(#fff,#b8b8b8 40%,#d8d8d8)"></div>
<div style="font-family:'Liberation Sans', sans-serif;white-space:nowrap;position:absolute;line-height:20px;font-size:11px;font-weight:normal;color:#000;letter-spacing:-0.105px;left:762px;top:565px">0.00</div>
<div style="left:3px;top:585px;width:791px;height:1px;background:linear-gradient(90deg,#a0a0a0 0%,#a0a0a0 97%,#d0d0d0 100%)"></div>
<svg style="left:13px;top:590px" width="7" height="10"><path d="M0.5 0.5 L5 4.5 L0.5 8.5Z" fill="#fff" stroke="#888"/></svg>
<div style="font-family:'Liberation Sans', sans-serif;white-space:nowrap;position:absolute;line-height:20px;font-size:12px;font-weight:bold;color:#000;transform:scaleX(1.0768);transform-origin:0 0;left:27px;top:585px">Sell</div>
<div style="font-family:'Liberation Sans', sans-serif;white-space:nowrap;position:absolute;line-height:20px;font-size:11px;font-weight:normal;color:#1a1a9a;letter-spacing:-0.781px;left:704px;top:586px">Pcs</div>
<div style="left:730px;top:587px;width:1px;height:12px;background:linear-gradient(#fff,#b8b8b8 40%,#d8d8d8)"></div>
<div style="left:751px;top:587px;width:1px;height:12px;background:linear-gradient(#fff,#b8b8b8 40%,#d8d8d8)"></div>
<div style="font-family:'Liberation Sans', sans-serif;white-space:nowrap;position:absolute;line-height:20px;font-size:11px;font-weight:normal;color:#000;letter-spacing:-0.105px;left:762px;top:586px">0.00</div>
<div style="left:3px;top:606px;width:791px;height:1px;background:linear-gradient(90deg,#a0a0a0 0%,#a0a0a0 97%,#d0d0d0 100%)"></div>
<svg style="left:13px;top:614px" width="7" height="7"><path d="M6 0.5 V6 H0.5Z" fill="#444"/></svg>
<div style="font-family:'Liberation Sans', sans-serif;white-space:nowrap;position:absolute;line-height:20px;font-size:12px;font-weight:bold;color:#000;transform:scaleX(1.0693);transform-origin:0 0;left:27px;top:606px">Foreign trade</div>
<div style="font-family:'Liberation Sans', sans-serif;white-space:nowrap;position:absolute;line-height:20px;font-size:11px;font-weight:bold;color:#000;transform:scaleX(1.1980);transform-origin:0 0;left:27px;top:650px">Intrastat</div>
<div style="font-family:'Liberation Sans', sans-serif;white-space:nowrap;position:absolute;line-height:20px;font-size:11px;font-weight:normal;color:#333;letter-spacing:-0.269px;left:27px;top:672px">Commodity:</div>
<div style="left:188px;top:672px;width:89px;height:21px;background:#fff;border-top:1px solid #7a7a7a;border-left:1px solid #7a7a7a;border-right:1px solid #d4d0c8;border-bottom:1px solid #d4d0c8;box-sizing:border-box;box-shadow:inset 1px 1px 0 #404040"></div>
<div style="left:260px;top:674px;width:16px;height:18px;background:#d4d0c8;border-top:1px solid #d4d0c8;border-left:1px solid #d4d0c8;border-right:1px solid #404040;border-bottom:1px solid #404040;box-sizing:border-box;box-shadow:inset 1px 1px 0 #fff,inset -1px -1px 0 #808080"></div>
<svg style="left:264px;top:681px" width="7" height="5"><path d="M0 0H7L3.5 4Z" fill="#000"/></svg>
<div style="font-family:'Liberation Sans', sans-serif;white-space:nowrap;position:absolute;line-height:20px;font-size:11px;font-weight:normal;color:#333;letter-spacing:-0.098px;left:27px;top:696px">Additional units:</div>
<div style="left:188px;top:696px;width:67px;height:21px;background:#fff;border-top:1px solid #7a7a7a;border-left:1px solid #7a7a7a;border-right:1px solid #d4d0c8;border-bottom:1px solid #d4d0c8;box-sizing:border-box;box-shadow:inset 1px 1px 0 #404040"></div>
<div style="font-family:'Liberation Sans', sans-serif;white-space:nowrap;position:absolute;line-height:20px;font-size:11px;font-weight:normal;color:#000;letter-spacing:-0.106px;right:739px;top:696px">0.000</div>
<div style="font-family:'Liberation Sans', sans-serif;white-space:nowrap;position:absolute;line-height:20px;font-size:11px;font-weight:normal;color:#333;letter-spacing:-0.091px;left:27px;top:720px">Charges percentage:</div>
<div style="left:188px;top:720px;width:48px;height:21px;background:#fff;border-top:1px solid #7a7a7a;border-left:1px solid #7a7a7a;border-right:1px solid #d4d0c8;border-bottom:1px solid #d4d0c8;box-sizing:border-box;box-shadow:inset 1px 1px 0 #404040"></div>
<div style="font-family:'Liberation Sans', sans-serif;white-space:nowrap;position:absolute;line-height:20px;font-size:11px;font-weight:normal;color:#000;letter-spacing:-0.105px;right:758px;top:720px">0.00</div>
<div style="font-family:'Liberation Sans', sans-serif;white-space:nowrap;position:absolute;line-height:20px;font-size:11px;font-weight:bold;color:#000;letter-spacing:0.102px;left:291px;top:650px">Origin</div>
<div style="font-family:'Liberation Sans', sans-serif;white-space:nowrap;position:absolute;line-height:20px;font-size:11px;font-weight:normal;color:#333;letter-spacing:0.052px;left:291px;top:672px">Country/region:</div>
<div style="left:382px;top:672px;width:101px;height:21px;background:#fff;border-top:1px solid #7a7a7a;border-left:1px solid #7a7a7a;border-right:1px solid #d4d0c8;border-bottom:1px solid #d4d0c8;box-sizing:border-box;box-shadow:inset 1px 1px 0 #404040"></div>
<div style="left:466px;top:674px;width:16px;height:18px;background:#d4d0c8;border-top:1px solid #d4d0c8;border-left:1px solid #d4d0c8;border-right:1px solid #404040;border-bottom:1px solid #404040;box-sizing:border-box;box-shadow:inset 1px 1px 0 #fff,inset -1px -1px 0 #808080"></div>
<svg style="left:470px;top:681px" width="7" height="5"><path d="M0 0H7L3.5 4Z" fill="#000"/></svg>
<div style="font-family:'Liberation Sans', sans-serif;white-space:nowrap;position:absolute;line-height:20px;font-size:11px;font-weight:normal;color:#333;letter-spacing:0.043px;left:291px;top:696px">State or province:</div>
<div style="left:382px;top:696px;width:101px;height:21px;background:#fff;border-top:1px solid #7a7a7a;border-left:1px solid #7a7a7a;border-right:1px solid #d4d0c8;border-bottom:1px solid #d4d0c8;box-sizing:border-box;box-shadow:inset 1px 1px 0 #404040"></div>
<div style="left:466px;top:698px;width:16px;height:18px;background:#d4d0c8;border-top:1px solid #d4d0c8;border-left:1px solid #d4d0c8;border-right:1px solid #404040;border-bottom:1px solid #404040;box-sizing:border-box;box-shadow:inset 1px 1px 0 #fff,inset -1px -1px 0 #808080"></div>
<svg style="left:470px;top:705px" width="7" height="5"><path d="M0 0H7L3.5 4Z" fill="#000"/></svg>
<div style="left:20px;top:667px;width:261px;height:33px;border:3px solid #fa0000;box-sizing:border-box;box-shadow:3px 3px 3px rgba(0,0,0,.45)"></div>
<div style="left:3px;top:750px;width:791px;height:1px;background:linear-gradient(90deg,#a0a0a0 0%,#a0a0a0 97%,#d0d0d0 100%)"></div>
<svg style="left:13px;top:755px" width="7" height="10"><path d="M0.5 0.5 L5 4.5 L0.5 8.5Z" fill="#fff" stroke="#888"/></svg>
<div style="font-family:'Liberation Sans', sans-serif;white-space:nowrap;position:absolute;line-height:20px;font-size:12px;font-weight:bold;color:#000;transform:scaleX(1.0879);transform-origin:0 0;left:27px;top:750px">Manage inventory</div>
<div style="font-family:'Liberation Sans', sans-serif;white-space:nowrap;position:absolute;line-height:20px;font-size:11px;font-weight:normal;color:#1a1a9a;letter-spacing:-0.781px;left:768px;top:751px">Pcs</div>
<div style="left:3px;top:771px;width:791px;height:1px;background:linear-gradient(90deg,#a0a0a0 0%,#a0a0a0 97%,#d0d0d0 100%)"></div>
<svg style="left:13px;top:776px" width="7" height="10"><path d="M0.5 0.5 L5 4.5 L0.5 8.5Z" fill="#fff" stroke="#888"/></svg>
<div style="font-family:'Liberation Sans', sans-serif;white-space:nowrap;position:absolute;line-height:20px;font-size:12px;font-weight:bold;color:#000;transform:scaleX(1.0904);transform-origin:0 0;left:27px;top:771px">Engineer</div>
<div style="font-family:'Liberation Sans', sans-serif;white-space:nowrap;position:absolute;line-height:20px;font-size:11px;font-weight:normal;color:#1a1a9a;letter-spacing:-0.781px;left:768px;top:772px">Pcs</div>
<div style="left:3px;top:792px;width:791px;height:1px;background:linear-gradient(90deg,#a0a0a0 0%,#a0a0a0 97%,#d0d0d0 100%)"></div>
<svg style="left:13px;top:797px" width="7" height="10"><path d="M0.5 0.5 L5 4.5 L0.5 8.5Z" fill="#fff" stroke="#888"/></svg>
<div style="font-family:'Liberation Sans', sans-serif;white-space:nowrap;position:absolute;line-height:20px;font-size:12px;font-weight:bold;color:#000;transform:scaleX(1.0259);transform-origin:0 0;left:27px;top:792px">Plan</div>
<div style="left:3px;top:813px;width:791px;height:1px;background:linear-gradient(90deg,#a0a0a0 0%,#a0a0a0 97%,#d0d0d0 100%)"></div>
<svg style="left:13px;top:818px" width="7" height="10"><path d="M0.5 0.5 L5 4.5 L0.5 8.5Z" fill="#fff" stroke="#888"/></svg>
<div style="font-family:'Liberation Sans', sans-serif;white-space:nowrap;position:absolute;line-height:20px;font-size:12px;font-weight:bold;color:#000;transform:scaleX(1.0770);transform-origin:0 0;left:27px;top:813px">Manage projects</div>
<div style="left:3px;top:834px;width:791px;height:1px;background:linear-gradient(90deg,#a0a0a0 0%,#a0a0a0 97%,#d0d0d0 100%)"></div>
<svg style="left:13px;top:839px" width="7" height="10"><path d="M0.5 0.5 L5 4.5 L0.5 8.5Z" fill="#fff" stroke="#888"/></svg>
<div style="font-family:'Liberation Sans', sans-serif;white-space:nowrap;position:absolute;line-height:20px;font-size:12px;font-weight:bold;color:#000;transform:scaleX(1.0585);transform-origin:0 0;left:27px;top:834px">Manage costs</div>
<div style="left:3px;top:855px;width:791px;height:1px;background:linear-gradient(90deg,#a0a0a0 0%,#a0a0a0 97%,#d0d0d0 100%)"></div>
<svg style="left:13px;top:860px" width="7" height="10"><path d="M0.5 0.5 L5 4.5 L0.5 8.5Z" fill="#fff" stroke="#888"/></svg>
<div style="font-family:'Liberation Sans', sans-serif;white-space:nowrap;position:absolute;line-height:20px;font-size:12px;font-weight:bold;color:#000;letter-spacing:0.048px;left:27px;top:855px">Financial dimensions</div>
<div style="left:751px;top:836px;width:1px;height:12px;background:linear-gradient(#fff,#b8b8b8 40%,#d8d8d8)"></div>
<div style="font-family:'Liberation Sans', sans-serif;white-space:nowrap;position:absolute;line-height:20px;font-size:11px;font-weight:normal;color:#000;letter-spacing:-0.105px;left:762px;top:835px">0.00</div>
<div style="left:3px;top:876px;width:791px;height:3px;background:#e8f1fb"></div>
<div style="left:3px;top:879px;width:982px;height:1px;background:#8d9aaa"></div>
<div style="font-family:'Liberation Sans', sans-serif;white-space:nowrap;position:absolute;line-height:20px;font-size:12px;font-weight:bold;color:#6f6a64;letter-spacing:-0.002px;left:811px;top:143px">Related product var...</div>
<svg style="left:945px;top:148px" width="13" height="12"><rect x="0.5" y="0.5" width="12" height="11" fill="#fff" stroke="#808080"/><rect x="1" y="1" width="3" height="10" fill="#c8c8cc"/><path d="M2 2.5V3.5M2 5.5V6.5M2 8.5V9.5" stroke="#888"/><path d="M5.5 3H9M5.5 6H8.5M5.5 9H9" stroke="#999"/><path d="M8.5 4.5L10.5 6L8.5 7.5Z" fill="#777"/><path d="M12.5 1V11" stroke="#2040c0" stroke-dasharray="1 1"/></svg>
<svg style="left:968px;top:150px" width="10" height="7"><path d="M1 6 L5 2 L9 6" stroke="#505050" stroke-width="1.8" fill="none"/></svg>
<div style="left:810px;top:165px;width:168px;height:114px;background:#fff"></div>
<div style="left:810px;top:165px;width:168px;height:16px;background:#d4d0c8;border-bottom:2px solid #404040;box-sizing:border-box"></div>
<div style="left:897px;top:165px;width:2px;height:14px;background:linear-gradient(90deg,#404040 50%,#fff 50%)"></div>
<div style="font-family:'Liberation Sans', sans-serif;white-space:nowrap;position:absolute;line-height:20px;font-size:11px;font-weight:normal;color:#000;letter-spacing:-0.162px;left:815px;top:163px">Product number</div>
<div style="font-family:'Liberation Sans', sans-serif;white-space:nowrap;position:absolute;line-height:20px;font-size:11px;font-weight:normal;color:#000;letter-spacing:-0.181px;left:850px;top:179px">This grid is empty.</div>
<div style="font-family:'Liberation Sans', sans-serif;white-space:nowrap;position:absolute;line-height:20px;font-size:11px;font-weight:normal;color:#2a6ad0;letter-spacing:-0.266px;left:949px;top:284px">More</div>
<div style="left:806px;top:306px;width:173px;height:1px;background:#c6d2e2"></div>
<div style="left:3px;top:880px;width:982px;height:29px;background:#e4e9f5"></div>
<svg style="left:18px;top:888px" width="14" height="14"><path d="M1 1H3V13H1Z M13 1V13L4 7Z" fill="#1e7ae6"/></svg>
<svg style="left:44px;top:888px" width="14" height="14"><path d="M13 1V13L1 7Z" fill="#1e7ae6"/></svg>
<svg style="left:70px;top:888px" width="14" height="14"><path d="M1 2H13M1 5H13M1 8H13M1 11H13" stroke="#9cc0ec" stroke-width="2"/><path d="M5 1V13M9 1V13" stroke="#e4e9f5" stroke-width="1"/></svg>
<svg style="left:96px;top:888px" width="14" height="14"><path d="M1 1V13L13 7Z" fill="#1e7ae6"/></svg>
<svg style="left:120px;top:888px" width="14" height="14"><path d="M1 1V13L10 7Z M11 1H13V13H11Z" fill="#1e7ae6"/></svg>
<div style="left:144px;top:884px;width:1px;height:20px;background:linear-gradient(rgba(30,60,110,0),#1e3c6e 30%,#1e3c6e 70%,rgba(30,60,110,0))"></div>
<div style="left:180px;top:884px;width:1px;height:20px;background:linear-gradient(rgba(30,60,110,0),#1e3c6e 30%,#1e3c6e 70%,rgba(30,60,110,0))"></div>
<div style="left:242px;top:884px;width:1px;height:20px;background:linear-gradient(rgba(30,60,110,0),#1e3c6e 30%,#1e3c6e 70%,rgba(30,60,110,0))"></div>
<div style="left:278px;top:884px;width:1px;height:20px;background:linear-gradient(rgba(30,60,110,0),#1e3c6e 30%,#1e3c6e 70%,rgba(30,60,110,0))"></div>
<div style="left:773px;top:884px;width:1px;height:20px;background:linear-gradient(rgba(30,60,110,0),#1e3c6e 30%,#1e3c6e 70%,rgba(30,60,110,0))"></div>
<div style="left:823px;top:884px;width:1px;height:20px;background:linear-gradient(rgba(30,60,110,0),#1e3c6e 30%,#1e3c6e 70%,rgba(30,60,110,0))"></div>
<div style="left:856px;top:884px;width:1px;height:20px;background:linear-gradient(rgba(30,60,110,0),#1e3c6e 30%,#1e3c6e 70%,rgba(30,60,110,0))"></div>
<div style="left:151px;top:883px;width:24px;height:24px;background:linear-gradient(#fde89a,#fdd66c);border:1px solid #d09a3a;border-radius:3px;box-sizing:border-box"></div>
<svg style="left:154px;top:886px" width="18" height="18"><path d="M2 16 L3 13 L14 2 L16 4 L5 15Z" fill="#f6dc8c" stroke="#6a5020"/><path d="M14 2 L16 4 L15 5 L13 3Z" fill="#c84848"/></svg>
<div style="left:187px;top:883px;width:24px;height:24px;background:linear-gradient(#fde89a,#fdd66c);border:1px solid #d09a3a;border-radius:3px;box-sizing:border-box"></div>
<svg style="left:191px;top:889px" width="17" height="13"><rect x="0.5" y="0.5" width="16" height="11" fill="#fff" stroke="#6a7a90"/><path d="M9.5 1.5H10.5M11.5 1.5H12.5M13.5 1.5H14.5" stroke="#6a7a90"/><path d="M2.5 5H5.5M2.5 8.5H5.5" stroke="#8a9ab0"/><rect x="7.5" y="3.5" width="7" height="2.5" fill="#fff" stroke="#8a9ab0"/><rect x="7.5" y="7.5" width="7" height="2.5" fill="#fff" stroke="#8a9ab0"/></svg>
<svg style="left:217px;top:889px" width="16" height="13"><rect x="0" y="0" width="16" height="13" fill="#d0dcf0"/><path d="M0 3.5H16M0 6.5H16M0 9.5H16M4.5 0V13M8.5 0V13M12.5 0V13" stroke="#f8fbff"/><path d="M0 12.5H16M15.5 0V13" stroke="#6a7a98"/></svg>
<svg style="left:253px;top:887px" width="15" height="16"><path d="M1.5 3.5H9L13.5 8V15.5H1.5Z" fill="#fff" stroke="#888"/><path d="M4 9V2.5Q4 0.8 5.8 0.8Q7.5 0.8 7.5 2.5V8Q7.5 9.5 6 9.5Q5 9.5 5 8.2V3.5" stroke="#555" fill="none" stroke-width="1.1"/></svg>
<div style="font-family:'Liberation Sans', sans-serif;white-space:nowrap;position:absolute;line-height:20px;font-size:11px;font-weight:normal;color:#222;letter-spacing:0.024px;left:285px;top:885px">Item commodity code</div>
<svg style="left:783px;top:886px" width="18" height="18"><defs><linearGradient id="bell" x1="0" x2="1"><stop offset="0" stop-color="#e0a010"/><stop offset="0.4" stop-color="#fff080"/><stop offset="1" stop-color="#c88008"/></linearGradient></defs><path d="M3.5 12.5 Q3.5 4 6 2.5 Q8.5 0.5 11 2.5 Q13.5 4 13.5 12.5Z" fill="url(#bell)"/><path d="M1 12.5 H16 Q16.8 14.8 14.5 15.2 H2.5 Q0.2 14.8 1 12.5Z" fill="#e8a818"/><circle cx="8.5" cy="15.5" r="1.6" fill="#e0a010"/><circle cx="8.5" cy="1.5" r="1.2" fill="#e8b020"/></svg>
<div style="font-family:'Liberation Sans', sans-serif;white-space:nowrap;position:absolute;line-height:20px;font-size:11px;font-weight:normal;color:#222;letter-spacing:0.182px;left:800px;top:885px">(0)</div>
<div style="font-family:'Liberation Sans', sans-serif;white-space:nowrap;position:absolute;line-height:20px;font-size:10px;font-weight:normal;color:#222;letter-spacing:-0.375px;left:830px;top:886px">USD</div>
<div style="font-family:'Liberation Sans', sans-serif;white-space:nowrap;position:absolute;line-height:20px;font-size:11px;font-weight:normal;color:#222;letter-spacing:-0.250px;left:863px;top:885px">ceu</div>
<div style="left:895px;top:883px;width:74px;height:24px;background:#d4d0c8;border-top:1px solid #fff;border-left:1px solid #fff;border-right:2px solid #404040;border-bottom:2px solid #404040;box-sizing:border-box"></div>
<div style="font-family:'Liberation Sans', sans-serif;white-space:nowrap;position:absolute;line-height:20px;font-size:11px;font-weight:normal;color:#000;letter-spacing:-0.625px;left:919px;top:885px">Close</div>
<svg style="left:971px;top:895px" width="13" height="13"><path d="M12 1L1 12M12 5L5 12M12 9L9 12" stroke="#8a8a8a" stroke-width="1.2"/></svg>
</body></html>
